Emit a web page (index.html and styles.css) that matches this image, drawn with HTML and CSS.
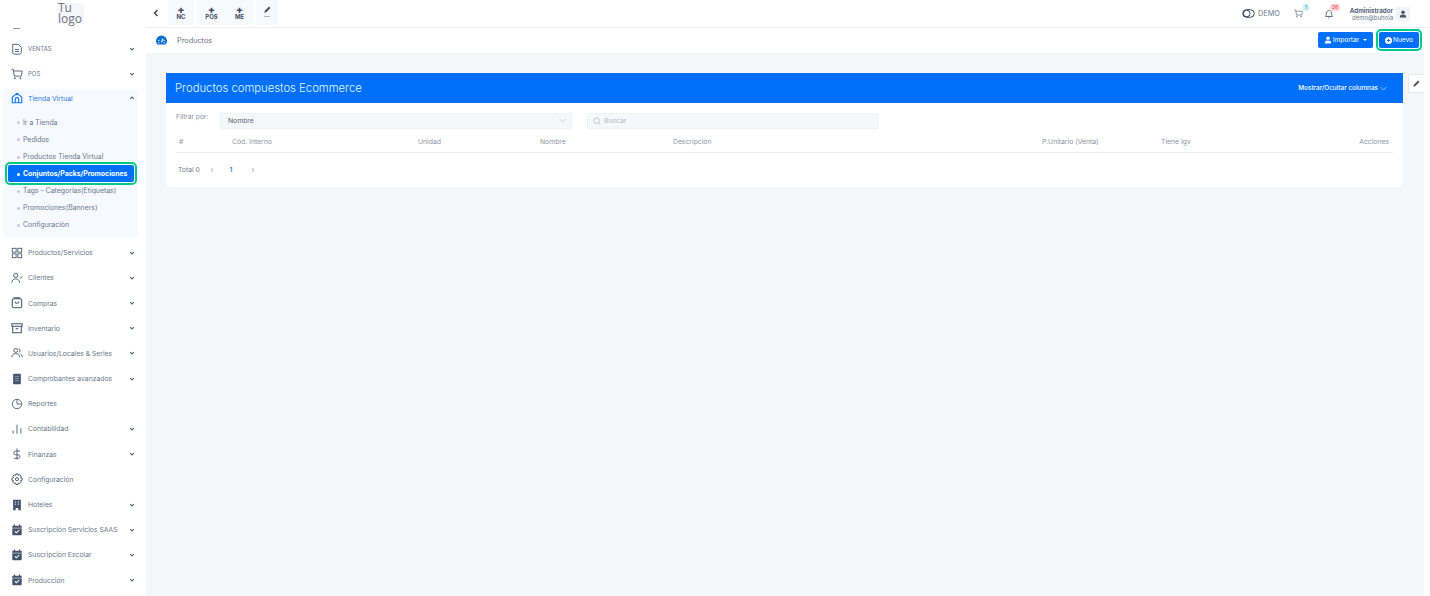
FILE: index.html
```html
<!DOCTYPE html>
<html lang="es">
<head>
  <meta charset="UTF-8">
  <title>Productos</title>
  <link rel="stylesheet" href="styles.css">
</head>
<body>
  <svg class="defs" width="0" height="0">
    <symbol id="chev" viewBox="0 0 10 10"><path d="M2 3.500 5 6.500 8 3.500" fill="none" stroke="currentColor" stroke-width="1.800"/></symbol>
    <symbol id="cal" viewBox="0 0 14 14"><path d="M4 .5v3M10 .5v3" stroke="#44546f" stroke-width="1.500"/><rect x="1.500" y="2" width="11" height="11" rx="1" fill="#44546f"/><path d="M1.500 4.800h11" stroke="#fff" stroke-width=".6"/><path d="M4.500 8.500 6.300 10.200 9.600 7" fill="none" stroke="#fff" stroke-width="1.200"/></symbol>
  </svg>

  <aside class="sidebar">
    <div class="logo"><span>Tu</span><span>logo</span></div>
    <nav class="menu">
      <div class="cut"></div>
      <a class="item">
        <svg class="ico" viewBox="0 0 14 14" fill="none" stroke="#44546f"><path d="M2 1.500h6.500l3.500 3.500v6a2 2 0 0 1-2 2H4a2 2 0 0 1-2-2zM4.500 7.500h5M4.500 10h5"/></svg>
        <span class="caps">VENTAS</span><svg class="chev"><use href="#chev"/></svg>
      </a>
      <a class="item">
        <svg class="ico" viewBox="0 0 14 14" fill="none" stroke="#44546f"><path d="M.5 1.500h2l1.500 8h8l1-6h-10"/><circle cx="4.500" cy="12" r=".7"/><circle cx="11" cy="12" r=".7"/></svg>
        <span class="caps">POS</span><svg class="chev"><use href="#chev"/></svg>
      </a>
      <div class="group">
        <a class="item open">
          <svg class="ico" viewBox="0 0 14 14" fill="none" stroke="#0a7cf0" stroke-width="1.300"><path d="M1.500 6 7 1.500 12.500 6v6.500h-11zM5 12.500V8.500a2 2 0 0 1 4 0v4"/></svg>
          <span>Tienda Virtual</span><svg class="chev up"><use href="#chev"/></svg>
        </a>
        <ul class="sub">
          <li>Ir a Tienda</li>
          <li>Pedidos</li>
          <li>Productos Tienda Virtual</li>
          <li class="active">Conjuntos/Packs/Promociones</li>
          <li>Tags - Categorias(Etiquetas)</li>
          <li>Promociones(Banners)</li>
          <li>Configuración</li>
        </ul>
      </div>
      <a class="item">
        <svg class="ico" viewBox="0 0 14 14" fill="none" stroke="#44546f"><rect x="1.500" y="1.500" width="4.500" height="4.500"/><rect x="8" y="1.500" width="4.500" height="4.500"/><rect x="1.500" y="8" width="4.500" height="4.500"/><rect x="8" y="8" width="4.500" height="4.500"/></svg>
        <span>Productos/Servicios</span><svg class="chev"><use href="#chev"/></svg>
      </a>
      <a class="item">
        <svg class="ico" viewBox="0 0 14 14" fill="none" stroke="#44546f"><circle cx="5.500" cy="4" r="2.500"/><path d="M1 12.500c0-3 2-4.500 4.500-4.500S10 9.500 10 12.500M10 6l1.300 1.200L13.500 5"/></svg>
        <span>Clientes</span><svg class="chev"><use href="#chev"/></svg>
      </a>
      <a class="item">
        <svg class="ico" viewBox="0 0 14 14" fill="none" stroke="#44546f" stroke-width="1.200"><rect x="1.500" y="2" width="11" height="10.500" rx="2"/><path d="M3 1h8M4.500 5.500c.5 2.500 4.500 2.500 5 0"/></svg>
        <span>Compras</span><svg class="chev"><use href="#chev"/></svg>
      </a>
      <a class="item">
        <svg class="ico" viewBox="0 0 14 14" fill="none" stroke="#44546f" stroke-width="1.200"><path d="M1 2h12v3H1zM2 5v7.500h10V5M5.500 8h3"/></svg>
        <span>Inventario</span><svg class="chev"><use href="#chev"/></svg>
      </a>
      <a class="item">
        <svg class="ico" viewBox="0 0 14 14" fill="none" stroke="#44546f"><circle cx="5.500" cy="4" r="2.300"/><path d="M1 12c0-3 2-4.300 4.500-4.300S10 9 10 12M9 1.800a2.300 2.300 0 0 1 0 4.400M11 8c1.300.7 2 2 2 4"/></svg>
        <span>Usuarios/Locales &amp; Series</span><svg class="chev"><use href="#chev"/></svg>
      </a>
      <a class="item">
        <svg class="ico" viewBox="0 0 14 14"><rect x="2.500" y="1" width="9" height="12" rx="1" fill="#44546f"/><path d="M4.500 4h5M4.500 6.500h5M4.500 9h5" stroke="#8fa0b8"/></svg>
        <span>Comprobantes avanzados</span><svg class="chev"><use href="#chev"/></svg>
      </a>
      <a class="item">
        <svg class="ico" viewBox="0 0 14 14" fill="none" stroke="#44546f"><path d="M7 1.500a5.500 5.500 0 1 0 5.500 5.500H7z"/><path d="M7 1.500a5.500 5.500 0 0 1 5.500 5.500"/></svg>
        <span>Reportes</span>
      </a>
      <a class="item">
        <svg class="ico" viewBox="0 0 14 14" fill="none" stroke="#44546f"><path d="M2.500 9v3.500M7 2v10.500M11.500 6v6.500"/></svg>
        <span>Contabilidad</span><svg class="chev"><use href="#chev"/></svg>
      </a>
      <a class="item">
        <svg class="ico" viewBox="0 0 14 14" fill="none" stroke="#44546f"><path d="M7 .5v13M10.500 3.500H5.500a2 2 0 0 0 0 4.500h3a2 2 0 0 1 0 4H3.500"/></svg>
        <span>Finanzas</span><svg class="chev"><use href="#chev"/></svg>
      </a>
      <a class="item">
        <svg class="ico" viewBox="0 0 14 14" fill="none" stroke="#44546f" stroke-width="1.100"><path d="M5.800 1h2.400l.4 1.800 1.700-.7 1.600 1.600-.8 1.700 1.900.6v2.400l-1.900.6.800 1.700-1.600 1.600-1.700-.7-.4 1.800H5.800l-.4-1.800-1.700.7-1.600-1.600.8-1.700L1 8.400V6l1.900-.6-.8-1.700 1.600-1.600 1.700.7z"/><circle cx="7" cy="7.200" r="1.800"/></svg>
        <span>Configuración</span>
      </a>
      <a class="item">
        <svg class="ico" viewBox="0 0 14 14"><path d="M2.500 1h9v12h-3v-2.500h-3V13h-3z" fill="#44546f"/><path d="M4.500 3.500h1.500M8 3.500h1.500M4.500 6h1.500M8 6h1.500" stroke="#fff"/></svg>
        <span>Hoteles</span><svg class="chev"><use href="#chev"/></svg>
      </a>
      <a class="item">
        <svg class="ico"><use href="#cal"/></svg>
        <span>Suscripción Servicios SAAS</span><svg class="chev"><use href="#chev"/></svg>
      </a>
      <a class="item">
        <svg class="ico"><use href="#cal"/></svg>
        <span>Suscripción Escolar</span><svg class="chev"><use href="#chev"/></svg>
      </a>
      <a class="item">
        <svg class="ico"><use href="#cal"/></svg>
        <span>Producción</span><svg class="chev"><use href="#chev"/></svg>
      </a>
    </nav>
  </aside>

  <div class="main">
    <header class="topbar">
      <svg class="back" viewBox="0 0 8 8"><path d="M5.500 1 2.500 4l3 3" fill="none" stroke="#333f55" stroke-width="1.400"/></svg>
      <div class="quick">
        <a class="qbtn q-nc"><b class="plus">+</b>NC</a>
        <a class="qbtn q-pos"><b class="plus">+</b>POS</a>
        <a class="qbtn q-me"><b class="plus">+</b>ME</a>
        <a class="qbtn q-edit">
          <svg viewBox="0 0 10 10" width="9" height="9"><path d="M1.500 8.500 2 6.500 6.800 1.700 8.300 3.200 3.500 8z" fill="#445069"/></svg>
          <span class="dots">...</span>
        </a>
      </div>
      <div class="tools">
        <span class="demo">
          <svg viewBox="0 0 14 10" width="13" height="9" fill="none" stroke="#36435a" stroke-width="1.100"><rect x=".6" y=".8" width="12.800" height="8.400" rx="4.200"/><circle cx="5" cy="5" r="3.700"/></svg>
          DEMO
        </span>
        <span class="tool t-cart">
          <svg viewBox="0 0 14 14" width="9" height="9" fill="none" stroke="#5d6b82"><path d="M.5 1.500h2l1.500 8h8l1-6h-10"/><circle cx="4.500" cy="12" r=".7"/><circle cx="11" cy="12" r=".7"/></svg>
          <i class="badge blue">1</i>
        </span>
        <span class="tool t-bell">
          <svg viewBox="0 0 14 14" width="10" height="10" fill="none" stroke="#5d6b82" stroke-width="1.300"><path d="M2 10.500c1.500-1.500 1-3 1.500-5S5.500 2 7 2s3 1.500 3.500 3.500 0 3.500 1.500 5zM6 12.500h2"/></svg>
          <i class="badge red">26</i>
        </span>
        <span class="user"><b>Administrador</b><small>demo@buhola</small></span>
        <span class="avatar">
          <svg viewBox="0 0 10 10" width="8" height="8" fill="#44546f"><circle cx="5" cy="2.800" r="2.200"/><path d="M1 9.500c0-3 1.500-3.800 4-3.800s4 .8 4 3.800z"/></svg>
        </span>
      </div>
    </header>

    <div class="crumbs">
      <svg class="gauge" viewBox="0 0 12 10"><path d="M1.500 10A6 6 0 1 1 10.500 10z" fill="#0d6fd0"/><path d="M6 7.500 7.600 3.500" stroke="#fff" stroke-width="1.200"/><path d="M2.300 5.500h1.400M8.300 5.500h1.400M2.300 8h1.400M8.300 8h1.400" stroke="#fff"/></svg>
      <span class="crumb">Productos</span>
      <div class="actions">
        <a class="btn btn-import">
          <svg viewBox="0 0 10 10" width="8" height="8" fill="#fff"><circle cx="5" cy="2.800" r="2.200"/><path d="M1 9.500c0-3 1.500-3.800 4-3.800s4 .8 4 3.800z"/></svg>
          Importar <i class="caret"></i>
        </a>
        <a class="btn btn-new">
          <svg viewBox="0 0 10 10" width="7" height="7"><circle cx="5" cy="5" r="5" fill="#fff"/><path d="M5 2.500v5M2.500 5h5" stroke="#0070fa" stroke-width="1.300"/></svg>
          Nuevo
        </a>
      </div>
    </div>

    <div class="content">
      <section class="card">
        <div class="card-head">
          <h2>Productos compuestos Ecommerce</h2>
          <span class="toggle">Mostrar/Ocultar columnas <svg width="7" height="7" viewBox="0 0 10 10"><path d="M1 3 5 7 9 3" fill="none" stroke="#cfe3ff" stroke-width="1.100"/></svg></span>
        </div>
        <div class="card-body">
          <div class="filters">
            <label>Filtrar por:</label>
            <div class="field select">Nombre
              <svg width="7" height="7" viewBox="0 0 10 10"><path d="M1 3 5 7 9 3" fill="none" stroke="#c0c4cc" stroke-width="1.100"/></svg>
            </div>
            <div class="field search">
              <svg width="8" height="8" viewBox="0 0 10 10" fill="none" stroke="#b5bac4"><circle cx="4.500" cy="4.500" r="3.500"/><path d="M7 7l2.500 2.500"/></svg>
              Buscar
            </div>
          </div>
          <table class="grid">
            <thead>
              <tr>
                <th class="c-num">#</th>
                <th class="c-code">Cód. Interno</th>
                <th class="c-unit">Unidad</th>
                <th class="c-name">Nombre</th>
                <th class="c-desc">Descripción</th>
                <th class="c-price">P.Unitario (Venta)</th>
                <th class="c-igv">Tiene Igv</th>
                <th class="c-act">Acciones</th>
              </tr>
            </thead>
          </table>
          <div class="pager">
            <span>Total 0</span>
            <span class="arrow">‹</span>
            <span class="page">1</span>
            <span class="arrow">›</span>
          </div>
        </div>
      </section>
      <a class="side-tab">
        <svg viewBox="0 0 10 10" width="9" height="9"><path d="M1.500 8.500 2 6.500 6.800 1.700 8.300 3.200 3.500 8z" fill="#555"/></svg>
      </a>
    </div>
  </div>
</body>
</html>
```

FILE: styles.css
```css
* { box-sizing: border-box; }

body {
  margin: 0;
  height: 100vh;
  display: flex;
  overflow: hidden;
  background: #fff;
  font-family: "Inter", "Noto Sans", sans-serif;
  font-size: 7px;
  color: #6a788e;
}

.defs { position: absolute; }

/* sidebar */
.sidebar {
  width: 146px;
  flex: none;
  background: #fff;
  overflow: hidden;
}

.logo {
  width: 27px;
  height: 24px;
  margin: 0 0 0 57px;
  padding-top: 3px;
  background: linear-gradient(#fff 3px, #f6f6f9 3px);
  font-family: "Open Sans", sans-serif;
  font-size: 12px;
  color: #6e7280;
  display: flex;
  flex-direction: column;
}
.logo span { height: 10.500px; line-height: 10.500px; padding-left: 1px; }

.menu { padding: 0 8px 0 3px; }

.cut {
  width: 7px;
  height: 1px;
  margin: 4px 0 7px 10px;
  background: #8894a6;
}

.item {
  height: 25.2px;
  display: flex;
  align-items: center;
  padding: 0 3px 0 8px;
  font-size: 6.800px;
  white-space: nowrap;
}
.item span { margin-left: 5px; flex: 1; }
.item .caps { font-size: 6px; }
.ico { width: 12px; height: 12px; flex: none; }
.chev { width: 6px; height: 6px; color: #52627a; flex: none; }
.chev.up { transform: rotate(180deg); }

.group {
  background: #f6f9fd;
  border-radius: 4px;
  margin: 3px 0 2px;
  padding-bottom: 4.500px;
}
.open { color: #2b7de0; height: 18px; }
.sub {
  list-style: none;
  margin: 0;
  padding: 6.500px 0 0;
}
.sub li {
  height: 17.100px;
  line-height: 17.100px;
  margin: 0 4px 0 5px;
  padding-left: 15px;
  position: relative;
  font-size: 6.900px;
  white-space: nowrap;
}
.sub li::before {
  content: '';
  position: absolute;
  left: 9px;
  top: 7.500px;
  width: 3px;
  height: 3px;
  border-radius: 50%;
  background: #c3ccd8;
}
.sub .active {
  background: #0070fa;
  color: #fff;
  font-weight: 700;
  font-size: 6.900px;
  border-radius: 2px;
  outline: 2px solid #00c78a;
  outline-offset: 1px;
}
.sub .active::before { background: #fff; }

/* top */
.main {
  flex: 1;
  min-width: 0;
  display: flex;
  flex-direction: column;
}

.topbar {
  height: 28px;
  flex: none;
  display: flex;
  align-items: flex-start;
  background: #fff;
  border-bottom: 1px solid #eceef2;
}
.back { width: 8px; height: 8px; margin: 9px 0 0 6px; }
.quick { display: flex; margin-left: 8px; }
.qbtn {
  height: 25px;
  display: flex;
  flex-direction: column;
  align-items: center;
  background: #f8f9fa;
  font-size: 6px;
  font-weight: 700;
  color: #445069;
  line-height: 7px;
  padding-top: 6px;
}
.plus { font-size: 10px; line-height: 7px; }
.q-nc { width: 26px; margin-right: 3px; }
.q-pos { width: 29px; }
.q-me { width: 27px; margin-right: 3px; }
.q-edit { width: 22px; padding-top: 5px; }
.dots { line-height: 5px; margin-top: -2px; }

.tools {
  margin-left: auto;
  margin-right: 20px;
  display: flex;
  align-items: center;
  height: 27px;
}
.demo {
  display: flex;
  align-items: center;
  gap: 3px;
  width: 52px;
  font-size: 7.300px;
}
.tool { position: relative; display: flex; }
.t-cart { width: 30px; }
.t-bell { width: 24px; }
.badge {
  position: absolute;
  top: -5px;
  font-style: normal;
  font-size: 5px;
  line-height: 7px;
  height: 7px;
  padding: 0 2px;
  border-radius: 2px;
  text-align: center;
}
.t-cart .badge { left: 9px; }
.t-bell .badge { left: 6px; }
.blue { background: #cdeefb; color: #2aa7d8; }
.red { background: #fbd5d8; color: #e8424f; }
.user {
  display: flex;
  flex-direction: column;
  align-items: flex-end;
  line-height: 7px;
  width: 45px;
}
.user b { font-size: 6.200px; color: #56627a; white-space: nowrap; }
.user small { font-size: 6px; white-space: nowrap; }
.avatar {
  width: 14px;
  height: 14px;
  margin-left: 3px;
  display: flex;
  align-items: center;
  justify-content: center;
  background: #f1f3f6;
  border-radius: 2px;
}

.crumbs {
  height: 25px;
  flex: none;
  display: flex;
  align-items: center;
  padding: 0 11px 0 10px;
  background: #fff;
}
.gauge { width: 11px; height: 10px; margin-top: -2px; }
.crumb { margin-left: 10px; font-size: 7.300px; }
.actions { margin-left: auto; display: flex; gap: 6px; margin-top: -1px; }
.btn {
  height: 16px;
  display: flex;
  align-items: center;
  justify-content: center;
  gap: 1px;
  background: #0070fa;
  color: #fff;
  font-size: 6.600px;
  border-radius: 2px;
}
.btn-import { width: 55px; }
.btn-new {
  width: 40px;
  outline: 2px solid #00c78a;
  outline-offset: 1px;
}
.caret {
  border: 2px solid transparent;
  border-top-color: #fff;
  border-bottom: 0;
  margin-left: 3px;
}

/* content */
.content {
  flex: 1;
  position: relative;
  display: flex;
  align-items: flex-start;
  margin-right: 6px;
  padding: 20px 21px 0 20px;
  background: #f5f6f8;
}
.card {
  flex: 1;
  min-width: 0;
  background: #fff;
  border-radius: 0 0 5px 5px;
}
.card-head {
  height: 30px;
  display: flex;
  align-items: center;
  justify-content: space-between;
  padding: 0 16px 0 9px;
  background: #0070fa;
  color: #fff;
}
.card-head h2 {
  margin: 0;
  font-family: "Inter", sans-serif;
  font-size: 11.300px;
  font-weight: 300;
  color: #e4f4ff;
}
.toggle { font-size: 6.400px; font-weight: 500; display: flex; align-items: center; gap: 2px; }

.card-body { padding: 10px 10px 0; height: 84px; }
.filters {
  display: flex;
  align-items: flex-start;
  height: 16px;
}
.filters label { width: 44px; font-size: 6.600px; color: #8a93a1; }
.field {
  height: 16px;
  display: flex;
  align-items: center;
  padding-bottom: 1px;
  background: #f5f7fa;
  border: 1px solid #f0f1f4;
  border-radius: 2px;
  font-size: 6.800px;
}
.select {
  width: 352px;
  justify-content: space-between;
  padding: 0 5px 1px 7px;
  color: #5c6472;
}
.search {
  width: 292px;
  margin-left: 15px;
  gap: 3px;
  padding-left: 5px;
  color: #b5bac4;
}

.grid {
  width: 100%;
  margin-top: 2px;
  table-layout: fixed;
  border-collapse: collapse;
}
.grid th {
  height: 21px;
  padding: 0 0 0 3px;
  text-align: left;
  font-size: 6.800px;
  font-weight: 400;
  color: #8b94a2;
  border-bottom: 1.500px solid #eef0f3;
  white-space: nowrap;
}
.grid .c-num { width: 53px; padding-left: 3px; }
.c-code { width: 186px; }
.c-unit { width: 122px; }
.c-name { width: 133px; }
.c-desc { width: 369px; }
.c-price { width: 119px; }
.c-igv { width: 100px; }
.grid .c-act { text-align: right; padding-right: 4px; }

.pager {
  display: flex;
  align-items: center;
  height: 34px;
  padding-left: 2px;
  font-size: 6.800px;
  color: #767f8e;
}
.pager .arrow { width: 16px; text-align: center; font-size: 9px; color: #a9afba; margin-left: 4px; }
.pager .page { width: 20px; text-align: center; color: #2b7de0; font-weight: 600; margin-left: 1px; }

.side-tab {
  position: absolute;
  top: 21px;
  right: 0;
  width: 16px;
  height: 19px;
  display: flex;
  align-items: center;
  justify-content: center;
  background: #fff;
  border: 1px solid #e6e8ec;
  border-right: 0;
  border-radius: 2px 0 0 2px;
}
```
